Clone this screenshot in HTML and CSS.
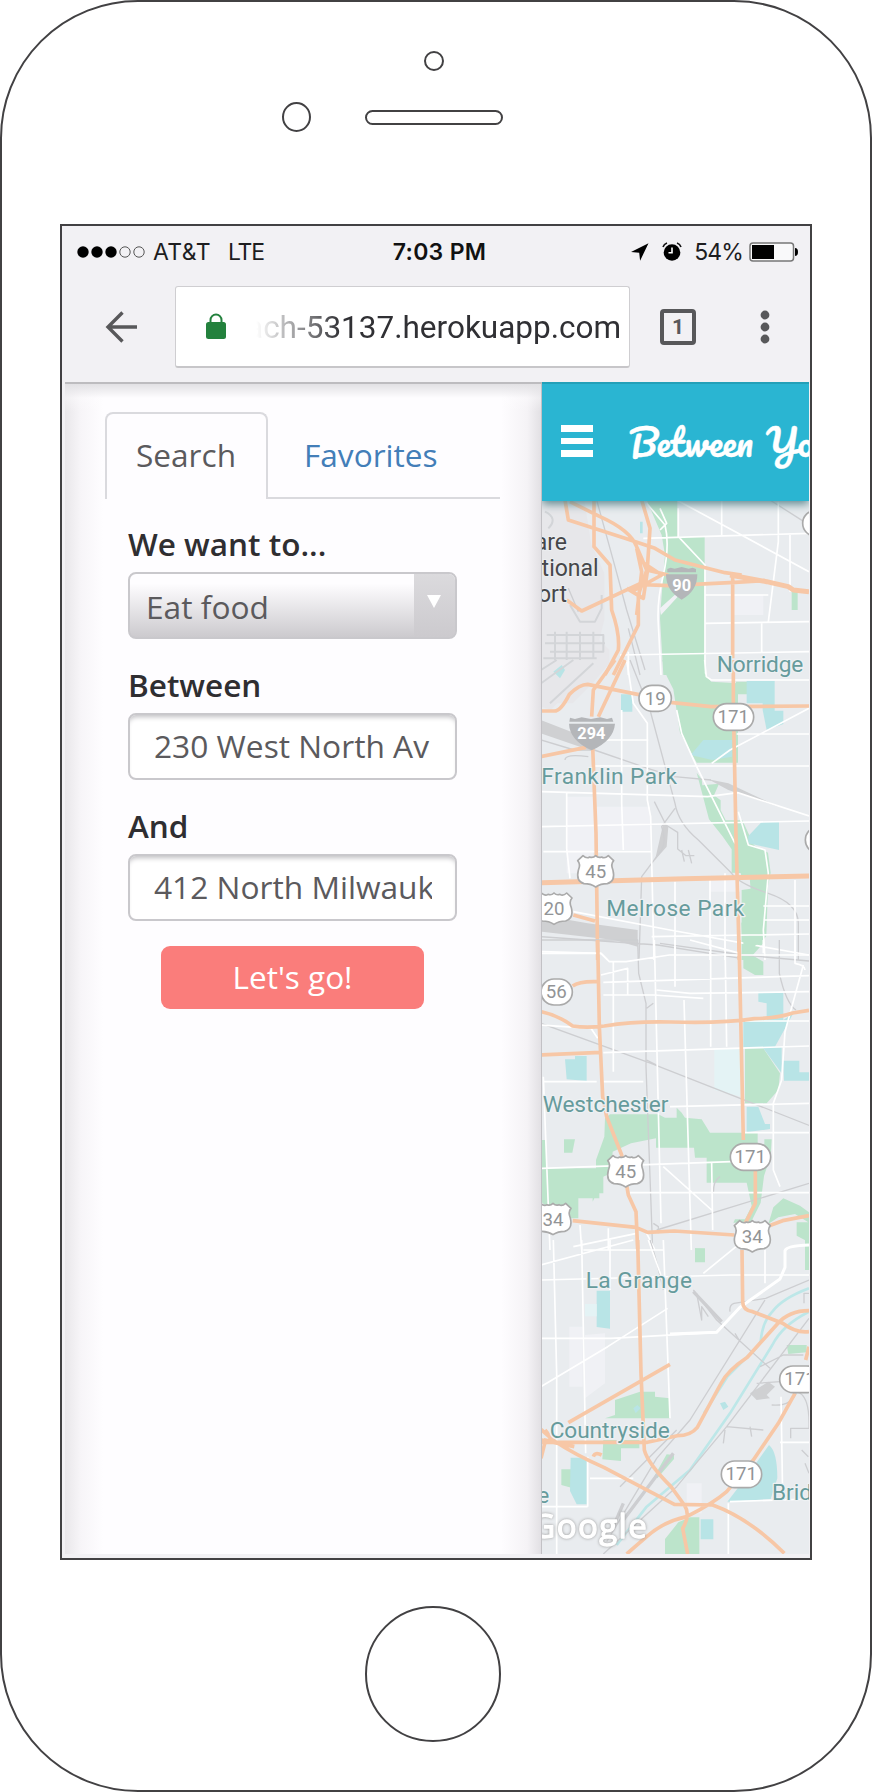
FILE: index.html
```html
<!DOCTYPE html>
<html lang="en">
<head>
<meta charset="utf-8">
<title>Between You</title>
<link rel="stylesheet" href="styles.css">
</head>
<body>
<div class="phone">
  <div class="phone-top">
    <span class="sensor"></span>
    <div class="earpiece"><span class="camera"></span><span class="speaker"></span></div>
  </div>
  <div class="screen">
    <div class="status">
      <div class="status-left">
        <svg width="68" height="14" viewBox="0 0 68 14"><g><circle cx="6" cy="7" r="5.7"/><circle cx="20" cy="7" r="5.7"/><circle cx="34" cy="7" r="5.7"/></g><g fill="none" stroke="#555"><circle cx="48" cy="7" r="5.2"/><circle cx="62" cy="7" r="5.2"/></g></svg>
        <span class="carrier">AT&amp;T</span><span class="network">LTE</span>
      </div>
      <div class="clock">7:03 PM</div>
      <div class="status-right">
        <svg width="18" height="18" viewBox="0 0 18 18"><path d="M17.5.3 0 9l8.2.7.9 8z"/></svg>
        <svg class="alarm" width="20" height="19" viewBox="0 0 20 19"><circle cx="10" cy="10.5" r="8.3"/><path d="M1 5Q2 2 5 1M15 1q3 1 4 4" fill="none" stroke="#111" stroke-width="1.6"/><path d="M10 5.5v5.3H6.5" fill="none" stroke="#fff" stroke-width="1.6"/></svg>
        <span class="percent">54%</span>
        <svg width="50" height="20" viewBox="0 0 50 20"><rect x="1" y="1" width="43.5" height="18" rx="3" fill="#f9f9fa" stroke="#777" stroke-width="1.5"/><path d="M3 3h22v14H3z"/><path d="M46 6q3 0 3 4t-3 4z"/></svg>
      </div>
    </div>
    <div class="toolbar">
      <svg class="back" width="34" height="34" viewBox="0 0 34 34"><path d="M17.5 2.5 3 17l14.500 14.500M3 17h29" fill="none" stroke="#58585a" stroke-width="3.4"/></svg>
      <div class="address">
        <svg width="20" height="27" viewBox="0 0 20 27"><path d="M4.500 11V7a5.500 5.500 0 0 1 11 0v4" fill="none" stroke="#23813d" stroke-width="2"/><rect y="9" width="20" height="17" rx="2.500" fill="#23813d"/></svg>
        <span class="url">ach-53137.herokuapp.com</span>
      </div>
      <span class="tab-count">1</span>
      <svg class="more" width="10" height="34" viewBox="0 0 10 34" fill="#58585a"><circle cx="5" cy="5" r="4.400"/><circle cx="5" cy="17" r="4.400"/><circle cx="5" cy="29" r="4.400"/></svg>
    </div>
    <div class="page">
      <div class="panel">
        <div class="tabs"><a class="tab active">Search</a><a class="tab">Favorites</a></div>
        <div class="form">
          <div class="label">We want to...</div>
          <div class="select"><span>Eat food</span><i class="caret"><b></b></i></div>
          <div class="label">Between</div>
          <div class="input"><span>230 West North Av</span></div>
          <div class="label">And</div>
          <div class="input"><span>412 North Milwauk</span></div>
          <div class="go">Let's go!</div>
        </div>
      </div>
      <div class="main">
        <div class="header">
          <div class="burger"><i></i><i></i><i></i></div>
          <svg class="brand" width="181" height="60" viewBox="0 0 181 60"><text x="1" y="44" textLength="124" lengthAdjust="spacingAndGlyphs">Between</text><text x="138" y="44" textLength="48" lengthAdjust="spacingAndGlyphs">Yo</text></svg>
        </div>
        <svg class="map" width="267" height="1053" viewBox="36 378 801 3159">
          <!-- O'Hare and Norridge -->
          <g>
            <path class="air" d="M33 375h130l20 130 40 90v140l-15 60 30 30v40l-50 60-60 60H33z"/>
            <path class="lake" d="M75 885l15-10 15 5-15 25zM330 440h8v35h-8z"/>
            <path class="park" d="M350 375h92v110h82v415H400l-10-170 5-70 10-120-10-60z"/>
            <path class="park" d="M785 650h18v55h-18z"/>
            <path class="land" d="M610 660h90v60h-90zM390 700l50-45 8 5-55 60z"/>
            <g class="runway"><path d="M50 780h170v50H60M75 770v120M110 770v110M150 770v100M190 770v80M45 805h180M40 850h160M33 880h130M120 690l30 50h45l20-40v-40M45 410q40 20 10 50"/></g>
            <path class="rail" d="M200 375l55 200 35 130 55 180M295 760l35 140M720 375l110 70M115 640l30 70"/>
            <path class="minor" d="M350 385l55 65q15 60-5 150-20 80-15 150l8 150M340 490l497-15M575 375v105M745 380v120l-30 240M780 480v170M440 375l397 215M445 400v85l80 85v330M525 660h190M525 745l312-5M270 840l567-10M695 742v90M295 830v70M390 400l20 45-20 20"/>
            <path class="highway" d="M105 375l10 60 170 55 90 30 60 35 150 38 50 7M120 380l90 45q90 40 110 90l30 70 65 15M192 375v140l48 55 5 135q25 70 20 120l-40 75M335 375l25 85-8 120-27 80v90l-75 150M110 675l45 33 170-80 90 4 200-10 90-5M320 520l15 70-15 130M335 560l60 40-90 50M290 640l50 30 15-100M608 600v250"/>
            <path class="freeway" d="M600 600l110 20 65 15 15 10 47 5"/>
          </g>
          <!-- Franklin Park and Melrose Park -->
          <g transform="translate(0 855)">
            <path class="air" d="M33 0h180l-30 55-60 30-60 65-30-10z"/>
            <path class="lake" d="M70 35l25-20 10 15-15 25z"/>
            <path class="park" d="M397 0h127v40l20 25 80 5v238H500l-50-90-20-130-20-40zM500 338l15 20 2 18 50-5-15 35 20 15v30l15 30h50l35 75 42 22 8 60-8 40-5 150-45 60-25-8-5-90 25-45 38-5 3-40-38-10-4-50-53-2v-70l-28-40-40-50z"/>
            <path class="park" d="M618 65h33v38h-33zM620 570h85l8 60-8 100-5 120-45 50h-20V690l38-5V650l-38 5z"/>
            <path class="lake" d="M650 62h84v90h26v40l-50 18-12-60v-20h-48zM273 103h34v52h-34zM482 285l38-45h86v50l-60 10zM655 528l40-42h52v84l-92-20z"/>
            <path class="land" d="M110 410h80v230h-80zM165 440h195v130H165zM540 660h90v35h-90z"/>
            <path class="yard" d="M33 180l90 35 50 45 20 15-160-55zM33 765l140 25 150 20v50l-70-20-220-25zM400 490l-25 110 35-40 5-60z"/>
            <path class="yard" d="M535 358l60 12 150 70-150-50z"/>
            <g class="runway"><path d="M33 70L130 0M60 130L190 10M33 30L80 0"/></g>
            <path class="rail" d="M300 0l60 150 75 280q10 60 70 110l100 100q20 30 110 60t90 90v110M33 240l100 30 60 0 160 55 80 25 110 10M373 425l35 70 35 22 0 50 25 20h25M455 570l8 35M475 570l10 40M435 445l-40 55q15 40 0 70l-60 80-8 250M33 830l350 25 250 40M105 300q0-20 70-10"/>
            <path class="minor" d="M290 0l20 130 42 60v230l10 50 10 430M275 150v280l5 140M185 240h170M185 318h652M837 145L600 270l-55 40M440 150l15 70 45 100 115 230M620 222h217M33 395l500 15 90-12 214 70M33 500l230-5 574-12M40 575h325M110 395v170l10 90M625 455l30 100 50 15 10 70-15 170 5 90M435 665v235M540 660v240M585 640v260M795 660v240M130 755l290 55 417 75M700 738h137M700 780h137M365 830l472-8M33 880h180l20 20M524 0l5 50 15 10h293"/>
            <path class="highway" d="M33 153h40q20 0 45-50 30-30 55-30l150 30 105 25 115 12 294-2M285 0l-80 170M255 0l-65 90-5 80M33 290l135-28M188 260l10 260 5 380M610 0v130l8 400 10 370M130 765l65 18"/>
            <path class="freeway" d="M33 668l430-12 374-8"/>
          </g>
          <!-- Westchester -->
          <g transform="translate(0 1695)">
            <path class="park" d="M640 0h60l-50 35 50 30v40h-25l-35-20zM645 325h55l50 75-5 50-35 40h-65zM225 535l15-12h145l20 10h35v-30l15 15 10 15 50 5 25 40h143v40h20v-20h22l-3 50-20 60-10 80-30 60h-52l5-10 30 0 20-40-15-70h-120v-75h-35l-3-30H378v-28l-75 15-55 25-5 65-45 20v-60l25-70z"/>
            <path class="park" d="M33 600h15v85h172v75h-12v15h-15l-5 10v-10h-43v60h-55l-57-50zM102 598h33l-8 40h-25zM760 775l50 22 27 20v90l-37-20v-40h35l-40-25-50 10-30 20 15-50zM495 925h30v10h-30z"/>
            <path class="lake" d="M685 155h75v85l30-20-55 100h20v80l-55-75-60 0v-85h70v-50l-25-5zM105 358l30 0v-10l35 0v75l-60-5zM760 362h48v35h29v25h-75zM650 500h35l20 52h15v15l-70 10z"/>
            <path class="water" d="M553 325h82v145l-82-20z"/>
            <path class="rail" d="M33 0h290l3 100 22 90v190l20 550M33 250l330 120 484 190M380 870l457-140M390 10l250 35 197 18M748 0v100q20 90 50 110M350 205l20-15M350 360l30 15M370 850l15 10 0 20M550 760q0-40 20-50"/>
            <path class="minor" d="M33 35l180 5 25 25 50 0 130-20 419 0M213 105l80-20v80M220 127l617-20M250 65v330M220 165h150l150 10M373 0l20 850M435 0v140M542 0v320M585 0l5 320M545 670l3 200M380 150l100 10 357-5M462 180l22 750M220 338l617-20M645 243h192M220 425h120M420 500l417-10M640 578h197M33 685l570-20M40 425h160M40 410l20 520M300 758h540M400 680l145 130M820 75l-55 200-10 145-25 70v200l20 50M33 255l150 10 20 30M33 710v-50M150 855l5 75M235 865v65M130 920l190-40M480 0l150 40M700 0v40M795 0v70q30 5 30 20M350 880l25 50"/>
            <path class="highway" d="M203 0l5 260 10 210 12 60 45 115 20 120 23 50 5 115M627 0l13 600M676 690v100l-35 70M33 215q50 10 95 43 40 7 95 0 90-15 200-12 150 5 250-10 75-2 115-17l49-8M33 345l180-8M128 138q20-15 75-13M128 842l190 20 35 15 80-4 180 12M718 857l40-15 79-15"/>
          </g>
          <!-- La Grange and Countryside -->
          <g transform="translate(0 2595)">
            <path class="park" d="M255 480l75-25h45v15l45 5v60H225l30-10zM220 600h108v25h-55v38l-56-5zM94 688h30v55l-30-8zM410 643l22 2v12l-50 58-10-5zM495 25l30 2v40h-30zM770 315h60v22l-55 5zM405 942v-45l40-50 35-15h28v110zM825 0h12v90h-12z"/>
            <path class="lake" d="M200 152h40v114l-40-5zM122 653h48v140h-30l-20-40zM592 785l50-65 75-105q25 20 25 100l-20 62zM512 838h38v60h-38zM570 490l15-5 10 15-15 10zM310 505l12-10 10 10-15 15z"/>
            <path class="water" d="M165 192h35v37h-35z"/>
            <path class="land" d="M118 260h40v180h-40zM165 285l60-5v150l-60 45zM470 730h45v90h-45z"/>
            <path class="yard" d="M660 460l55-35 20 15-25 25 10 10-40 5z"/>
            <path class="canal" d="M837 145q-80 30-110 70-30 30-35 90-20 30-40 45l-60 60-70 110M837 215q-80 40-110 100L600 520l-120 170-130 110-90 115"/>
            <path class="rail" d="M360 0q20 60 40 150M490 150l70 90 160 145M837 120l-130 55-95 15q-15 5-12 25M705 180L480 540l-100 115-150 250M837 235L590 560 440 740 220 942M590 560l110 10M580 610l5-40M660 560l5 30M725 495q60 5 75-40 40 10 37 110h-55v30M690 380l70-35h60M680 430l70-5M440 570L270 740M500 160l15 80v-40l20 30M615 280l15 25M837 160h-15v30M815 630l20 20M825 670l12 30"/>
            <path class="yardline" d="M490 155l85 90M280 840l150-200M250 860l30-70"/>
            <path class="minor" d="M70 0l10 400v542M155 0l12 640M240 0v150M400 0l20 535M355 0l50 140M33 75L310 0M33 120l570-15 234 0M33 295h210l320-18M33 440l200-120 180-115M520 100L630 10M705 30v100M180 715h130M33 800h140M173 650v150M600 785l237-8M595 790v152M753 470l5 300M750 607h87M160 30h240"/>
            <path class="avenue" d="M420 282l140-5 70-75 120-85 15-35v-50q5-15 72-17"/>
            <path class="highway" d="M323 0l10 400 10 230q10 40 80 110l40 55q20 30-5 70l15 77M636 30l2 155q0 25 30 30l90 35q40 30 79 25M837 212q-60 0-95 40l-90 100q-60 40-80 80l-70 130q-20 25-60 25l-90 20H33M115 548l305-175M33 568l40 35q60 40 150 80l210 110 115 2q110 40 215 145M33 600l100 20M837 320l-10 40M795 460l-50 90-75 110-80 95q-40 35-120 75-70 15-120 60l-60 52M190 650q5-15 25-5M33 655l15-60M45 570l20 25-20 15"/>
          </g>
          <!-- route markers -->
          <g class="shield"><rect x="327" y="931" width="97" height="78" rx="39"/><rect x="550" y="986" width="121" height="80" rx="40"/><rect x="33" y="1812" width="94" height="78" rx="39"/><rect x="601" y="2306" width="121" height="80" rx="40"/><rect x="574" y="3258" width="121" height="80" rx="40"/><rect x="749" y="2973" width="121" height="80" rx="40"/><circle cx="857" cy="445" r="39"/><circle cx="866" cy="1395" r="40"/></g>
          <defs><path id="us" class="shield" d="M-38-46Q-27-36-18-42Q-8-38 0-46Q8-38 18-42Q27-36 38-46L54-31Q44-20 52-2Q60 30 35 38Q15 38 0 48Q-15 38-35 38Q-60 30-52-2Q-44-20-54-31Z"/></defs>
          <use href="#us" x="197" y="1488"/><use href="#us" x="72" y="1600"/><use href="#us" x="287" y="2388"/><use href="#us" x="69" y="2531"/><use href="#us" x="667" y="2583"/>
          <g fill="#b4b6b9"><path d="M412 582l10-4 12 3 21-5 21 5 12-3 10 4v10h-86zM408 598h94q0 50-47 76-47-26-47-76z"/><path d="M120 1028l15 4 20-5 28 5 28-5 20 5 15-4 4 12H118zM117 1046h138q-4 50-70 80-66-30-68-80z"/></g>
          <g class="route"><text x="376" y="989">19</text><text x="610" y="1044">171</text><text x="79" y="1869">56</text><text x="197" y="1508">45</text><text x="72" y="1621">20</text><text x="287" y="2409">45</text><text x="69" y="2552">34</text><text x="667" y="2604">34</text><text x="661" y="2364">171</text><text x="634" y="3316">171</text><text x="810" y="3031">171</text></g>
          <g class="interstate"><text x="455" y="647">90</text><text x="184" y="1093">294</text></g>
          <g class="place"><text x="560" y="892" textLength="260">Norridge</text><text x="34" y="1227" textLength="407">Franklin Park</text><text x="229" y="1624" textLength="414">Melrose Park</text><text x="38" y="2212" textLength="377">Westchester</text><text x="167" y="2738" textLength="319">La Grange</text><text x="59" y="3190" textLength="360">Countryside</text><text x="726" y="3374">Brid</text><text x="22" y="3385">e</text></g>
          <g class="airport"><text x="111" y="526">are</text><text x="206" y="603">tional</text><text x="111" y="680">ort</text></g>
          <text class="google" x="4" y="3488" textLength="346">Google</text>
        </svg>
      </div>
    </div>
  </div>
  <div class="home"></div>
</div>
</body>
</html>
```
FILE: styles.css
```css
* { box-sizing: border-box; }
body { margin: 0; background: #fff; font-family: "Open Sans", sans-serif; }
svg { display: block; flex: none; }
.phone { width: 872px; height: 1792px; border: 2px solid #424143; border-radius: 138px; display: flex; flex-direction: column; align-items: center; overflow: hidden; }
.phone-top { width: 100%; height: 222px; flex: none; padding: 49px 0 0 280px; }
.sensor { display: block; width: 20px; height: 20px; border: 2px solid #424143; border-radius: 50%; margin-left: 142px; }
.earpiece { display: flex; align-items: center; margin-top: 31px; }
.camera { width: 29px; height: 30px; border: 2px solid #424143; border-radius: 50%; }
.speaker { width: 138px; height: 15px; border: 2px solid #424143; border-radius: 8px; margin-left: 54px; }
.screen { width: 752px; height: 1336px; flex: none; border: 2px solid #424143; background: #f2f1f4; display: flex; flex-direction: column; padding: 0 1px 4px 3px; }
.status { height: 51px; display: grid; grid-template-columns: 1fr auto 1fr; align-items: center; color: #1d1d1f; font-family: Inter, sans-serif; font-size: 23px; padding: 0 10px 0 12px; }
.status-left, .status-right { display: flex; align-items: center; }
.status-right { justify-content: flex-end; }
.carrier { margin-left: 8px; letter-spacing: .4px; }
.network { margin-left: 17px; letter-spacing: -1.2px; }
.clock { font-weight: 600; color: #111; letter-spacing: .3px; padding-left: 3px; }
.alarm { margin-left: 13px; }
.percent { margin: 0 6px 0 12px; letter-spacing: -.9px; }
.toolbar { height: 105px; display: flex; align-items: center; padding: 0 39px 6px 40px; }
.address { width: 455px; height: 82px; margin: 1px 30px 0 36px; padding-left: 30px; background: #fff; border: 1px solid #cfced1; border-bottom: 2px solid #c7c6c9; border-radius: 3px; display: flex; align-items: center; overflow: hidden; }
.url { font: 31.5px/40px Roboto, sans-serif; color: #303034; margin-left: 20px; white-space: nowrap; padding-top: 2px; -webkit-mask-image: linear-gradient(90deg, transparent 10px, #000 95px); mask-image: linear-gradient(90deg, transparent 10px, #000 95px); }
.tab-count { width: 36px; height: 36px; flex: none; border: 4px solid #58585a; border-radius: 4px; font: 700 21px/28px Roboto, sans-serif; color: #58585a; text-align: center; }
.more { margin-left: auto; }
.page { flex: 1; display: flex; min-height: 0; }
.panel { width: 477px; flex: none; background: linear-gradient(#e2e1e4, rgba(254,253,255,.4) 14px, rgba(254,253,255,0) 28px), linear-gradient(90deg, #e9e7ea, #f7f5f8 16px, rgba(254,253,255,0) 38px, rgba(254,253,255,0) 436px, #f5f3f6 462px, #e2e0e4), #fefdff; border-top: 2px solid #bdbcbf; padding: 28px 36px 0 40px; border-right: 1px solid #c2c1c5; }
.tabs { display: flex; width: 395px; height: 87px; border-bottom: 2px solid #dadade; }
.tab { height: 87px; line-height: 83px; font-size: 31.600px; color: #437eb8; padding: 1px 0 0 36px; }
.tab.active { width: 163px; background: #fefdff; border: 2px solid #dadade; border-bottom: 0; border-radius: 8px 8px 0 0; padding: 0 0 0 29px; line-height: 82px; color: #5b5a5d; }
.form { width: 329px; margin: 24px 0 0 23px; }
.label { height: 49px; line-height: 42px; font-size: 31.500px; font-weight: 600; color: #2f2e31; }
.select, .input { height: 67px; border: 2px solid #c9c8cc; border-radius: 8px; color: #5b5a5d; font-size: 31.700px; line-height: 63px; margin-bottom: 25px; }
.select { display: flex; overflow: hidden; background: linear-gradient(#fefdff 15%, #cccace); }
.select span { flex: 1; padding-left: 16px; padding-top: 1px; }
.caret { width: 41px; background: linear-gradient(#dbdadd, #cccace); }
.caret b { display: block; width: 0; margin: 21px 0 0 13px; border: 7px solid transparent; border-top: 13px solid #fff; border-bottom: 0; }
.input { background: #fff; box-shadow: inset 0 5px 5px -3px #c0bfc3; padding: 0 23px 0 24px; line-height: 62px; }
.input span { display: block; overflow: hidden; white-space: nowrap; }
.go { width: 263px; height: 63px; margin: 25px 0 0 33px; border-radius: 9px; background: #fa7d7b; color: #fff; font-size: 31.500px; line-height: 62px; text-align: center; }
.main { flex: 1; min-width: 0; overflow: hidden; display: flex; flex-direction: column; background: #e9ecef; }
.header { height: 119px; flex: none; background: #2ab5d2; border-top: 2px solid #23a0b8; display: flex; align-items: center; padding-left: 19px; z-index: 1; box-shadow: 0 3px 9px #5a848c; }
.burger { width: 32px; flex: none; display: flex; flex-direction: column; gap: 6px; margin-bottom: 3px; }
.burger i { height: 6.700px; background: #fff; }
.brand { margin-left: 35px; }
.brand text { font: 400 36px Pacifico, cursive; fill: #fff; stroke: #fff; stroke-width: .3px; }
.map { background: #e9ecef; }
.map path { stroke-linejoin: round; }
.air { fill: #e7e7ea; }
.park { fill: #bce4cb; }
.lake { fill: #b8e4e6; }
.water { fill: #e4f3f5; }
.land { fill: #f0f1f5; }
.yard { fill: #cfd0d2; }
.runway { fill: none; stroke: #d3d5d8; stroke-width: 6px; }
.rail { fill: none; stroke: #cdced1; stroke-width: 4px; }
.yardline { fill: none; stroke: #cdced1; stroke-width: 10px; }
.canal { fill: none; stroke: #bde7e8; stroke-width: 8px; }
.minor { fill: none; stroke: #fff; stroke-width: 5px; }
.avenue { fill: none; stroke: #fff; stroke-width: 9px; }
.highway { fill: none; stroke: #f7c7a6; stroke-width: 11px; }
.freeway { fill: none; stroke: #f7c7a6; stroke-width: 15px; }
.shield { fill: #fff; stroke: #aaa; stroke-width: 5px; }
.map text { stroke-linejoin: round; }
.place { font: 68px Roboto, sans-serif; fill: #669b9c; stroke: #eef1f3; stroke-width: 8px; paint-order: stroke; }
.route { font: 56px Roboto, sans-serif; fill: #929496; text-anchor: middle; }
.interstate { font: 700 49px Roboto, sans-serif; fill: #fff; text-anchor: middle; }
.airport { font: 69px Roboto, sans-serif; fill: #46474a; text-anchor: end; stroke: #eceef0; stroke-width: 6px; paint-order: stroke; }
.google { font: 500 99px "Open Sans", sans-serif; fill: #fff; stroke: #fff; stroke-width: 4px; filter: drop-shadow(0 0 5px #999); }
.home { width: 136px; height: 136px; flex: none; margin: 46px 6px 0 0; border: 2px solid #424143; border-radius: 50%; }
```
